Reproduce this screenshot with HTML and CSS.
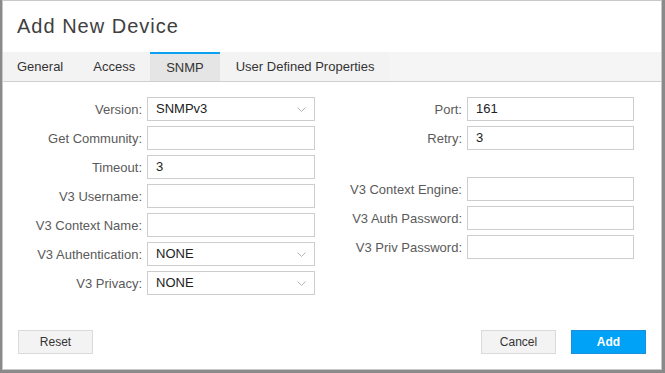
FILE: index.html
```html
<!DOCTYPE html>
<html>
<head>
<meta charset="utf-8">
<link rel="stylesheet" href="styles.css">
</head>
<body>
<div class="dialog">
  <div class="title">Add New Device</div>
  <div class="tabbar">
    <div class="tab">General</div>
    <div class="tab">Access</div>
    <div class="tab active">SNMP</div>
    <div class="tab">User Defined Properties</div>
  </div>
  <div class="form">
    <div class="col col-left">
      <div class="row"><span class="label">Version:</span><div class="field select">SNMPv3<svg class="chev" width="9" height="5" viewBox="0 0 9 5"><path d="M0.5 0.5 L4.5 4.5 L8.5 0.5" fill="none" stroke="#b5b5b5" stroke-width="1"/></svg></div></div>
      <div class="row"><span class="label">Get Community:</span><div class="field"></div></div>
      <div class="row"><span class="label">Timeout:</span><div class="field">3</div></div>
      <div class="row"><span class="label">V3 Username:</span><div class="field"></div></div>
      <div class="row"><span class="label">V3 Context Name:</span><div class="field"></div></div>
      <div class="row"><span class="label">V3 Authentication:</span><div class="field select">NONE<svg class="chev" width="9" height="5" viewBox="0 0 9 5"><path d="M0.5 0.5 L4.5 4.5 L8.5 0.5" fill="none" stroke="#b5b5b5" stroke-width="1"/></svg></div></div>
      <div class="row"><span class="label">V3 Privacy:</span><div class="field select">NONE<svg class="chev" width="9" height="5" viewBox="0 0 9 5"><path d="M0.5 0.5 L4.5 4.5 L8.5 0.5" fill="none" stroke="#b5b5b5" stroke-width="1"/></svg></div></div>
    </div>
    <div class="col col-right">
      <div class="row"><span class="label">Port:</span><div class="field">161</div></div>
      <div class="row"><span class="label">Retry:</span><div class="field">3</div></div>
      <div class="row spaced"><span class="label">V3 Context Engine:</span><div class="field"></div></div>
      <div class="row"><span class="label">V3 Auth Password:</span><div class="field"></div></div>
      <div class="row"><span class="label">V3 Priv Password:</span><div class="field"></div></div>
    </div>
  </div>
  <div class="footer">
    <button class="btn">Reset</button>
    <div class="spacer"></div>
    <button class="btn">Cancel</button>
    <button class="btn primary">Add</button>
  </div>
</div>
</body>
</html>
```

FILE: styles.css
```css
html, body {
  margin: 0;
  padding: 0;
  width: 665px;
  height: 373px;
  overflow: hidden;
  background: #8a8a8a;
}
body {
  font-family: "Liberation Sans", Arial, sans-serif;
}
.dialog {
  position: relative;
  margin: 1px 4px 0 3px;
  width: 658px;
  height: 368px;
  background: #fff;
  box-shadow: 0 0 0 1px #c8c8c8;
  display: flex;
  flex-direction: column;
  box-sizing: border-box;
}
.title {
  height: 51px;
  line-height: 51px;
  padding-left: 14px;
  font-size: 20px;
  letter-spacing: 1px;
  color: #404040;
}
.tabbar {
  height: 29px;
  display: flex;
  background: #f5f5f5;
  border-bottom: 1px solid #cfcfcf;
}
.tab {
  padding: 0 15px 0 14px;
  line-height: 30px;
  font-size: 13px;
  color: #333;
  background: #f3f3f3;
  box-sizing: border-box;
  height: 29px;
}
.tab:nth-child(2) { padding: 0 15px; }
.tab:nth-child(4) { padding: 0 15px 0 16px; }
.tab.active {
  background: #e5e5e5;
  border-top: 2px solid #0aa2f0;
  line-height: 28px;
  padding: 0 16px;
}
.form {
  display: flex;
  padding-top: 15px;
}
.col {
  display: flex;
  flex-direction: column;
  gap: 5px;
}
.row {
  display: flex;
  align-items: center;
  height: 24px;
}
.row.spaced {
  margin-top: 22px;
}
.label {
  text-align: right;
  font-size: 13px;
  color: #5a5a5a;
  padding-right: 5px;
}
.col-left .label { width: 139px; }
.col-right { margin-left: 24px; }
.col-right .label { width: 123px; }
.field {
  box-sizing: border-box;
  height: 24px;
  border: 1px solid #cdcdcd;
  padding-left: 8px;
  font-size: 13px;
  line-height: 22px;
  color: #222;
  position: relative;
}
.col-left .field { width: 168px; }
.col-right .field { width: 167px; }
.chev {
  position: absolute;
  right: 8px;
  top: 9px;
}
.footer {
  margin-top: auto;
  display: flex;
  padding: 0 15px 15px 15px;
}
.spacer { flex: 1; }
.btn {
  width: 75px;
  height: 24px;
  box-sizing: border-box;
  border: 1px solid #dadada;
  background: #f3f3f3;
  font-family: "Liberation Sans", Arial, sans-serif;
  font-size: 12px;
  color: #333;
  padding: 0;
  margin: 0;
}
.btn + .btn { margin-left: 15px; }
.btn.primary {
  background: #00a2f7;
  border-color: #1a8fdb;
  color: #fff;
  font-weight: bold;
}
```
